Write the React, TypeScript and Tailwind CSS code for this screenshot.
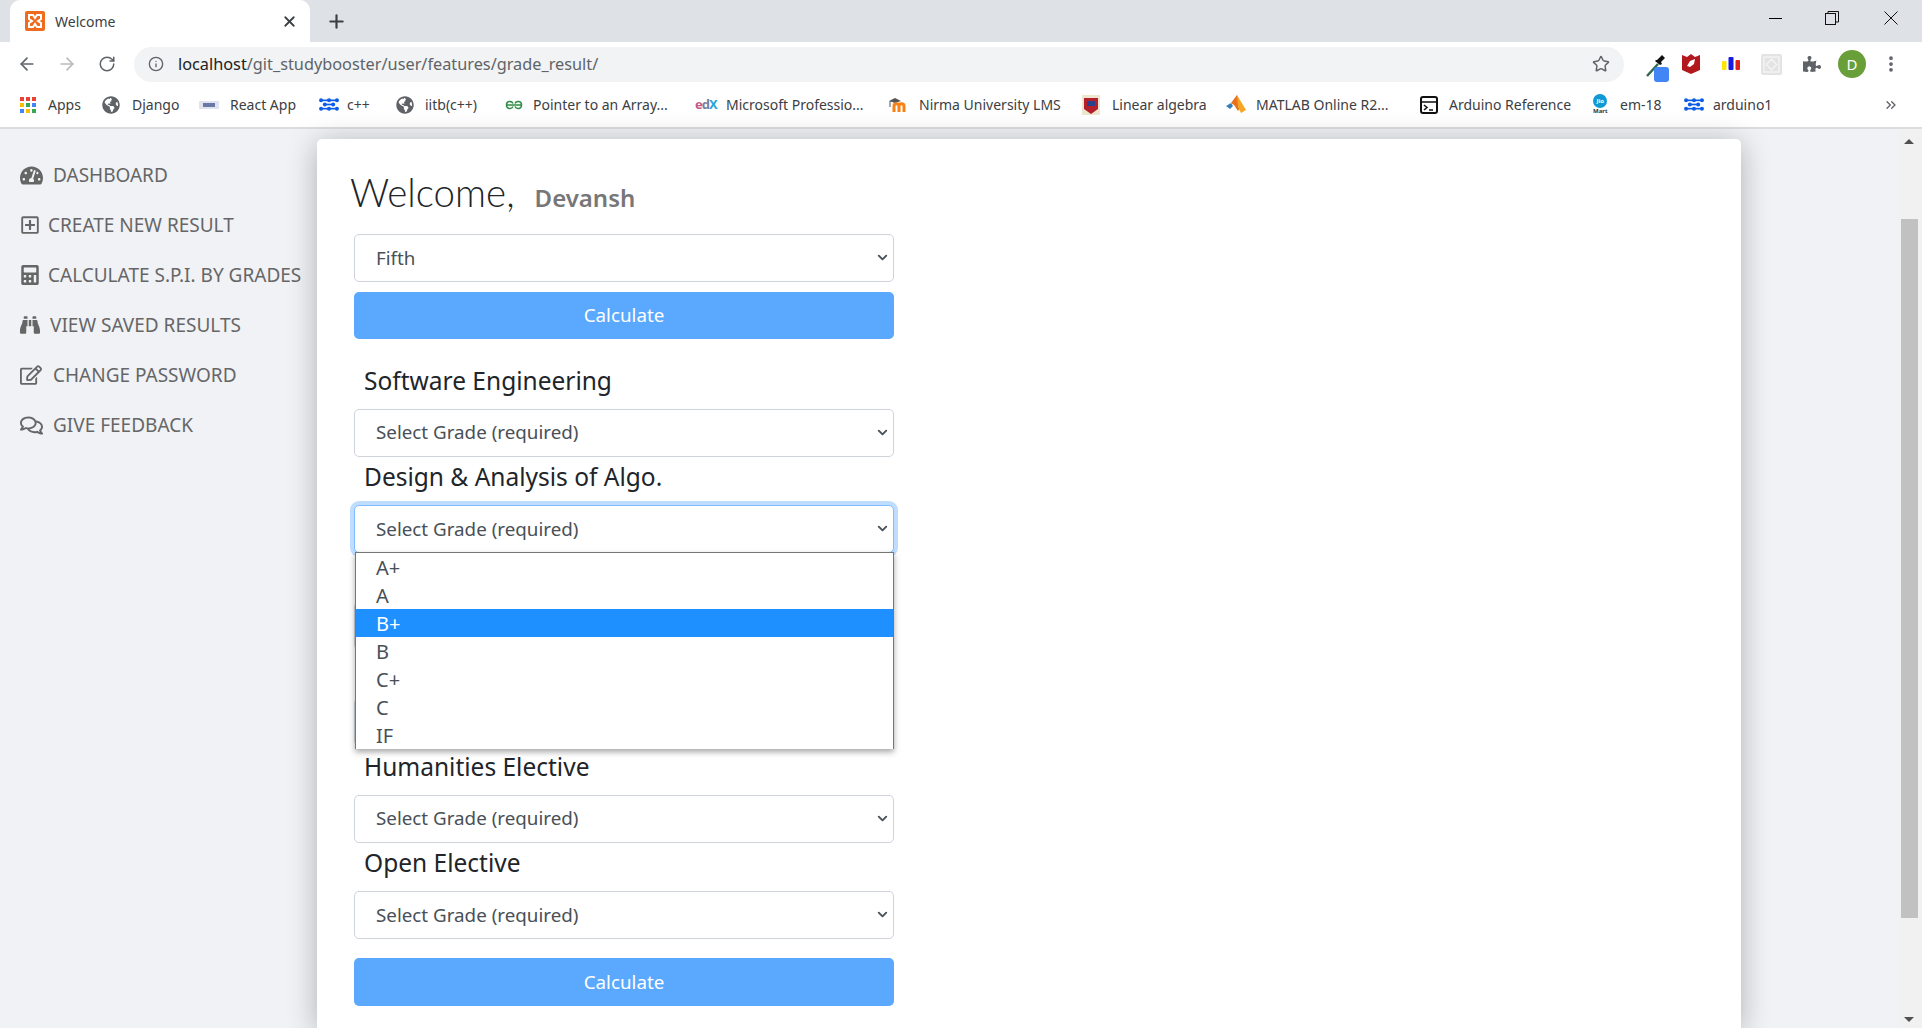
import {
  FaTachometerAlt,
  FaRegPlusSquare,
  FaCalculator,
  FaBinoculars,
  FaRegEdit,
  FaRegComments,
  FaPuzzlePiece,
  FaGlobeAmericas,
} from "react-icons/fa";
import { ArrowLeft, ArrowRight, RotateCw, Info, Star, X, Plus, ChevronDown, ChevronsRight, EllipsisVertical } from "lucide-react";
import type { ReactNode } from "react";

const FONT = "font-['Noto_Sans','Open_Sans',sans-serif]";

const navItems = [
  { label: "DASHBOARD", icon: <FaTachometerAlt size={23} />, gap: "w-[33px]" },
  { label: "CREATE NEW RESULT", icon: <FaRegPlusSquare size={20} />, gap: "w-[28px]" },
  { label: "CALCULATE S.P.I. BY GRADES", icon: <FaCalculator size={20} />, gap: "w-[28px]" },
  { label: "VIEW SAVED RESULTS", icon: <FaBinoculars size={20} />, gap: "w-[30px]" },
  { label: "CHANGE PASSWORD", icon: <FaRegEdit size={22} />, gap: "w-[33px]" },
  { label: "GIVE FEEDBACK", icon: <FaRegComments size={23} />, gap: "w-[33px]" },
];

// two of the subjects sit behind the open dropdown in the picture
const subjects = ["Software Engineering", "Design & Analysis of Algo.", "", "", "Humanities Elective", "Open Elective"];
const grades = ["A+", "A", "B+", "B", "C+", "C", "IF"];

function GlobeIcon() {
  return <FaGlobeAmericas size={18} className="text-[#5f6368]" />;
}

function DotsIcon() {
  return (
    <svg width="20" height="17" viewBox="-3 0 24 16" fill="#0b5ce6">
      <rect x="1" y="2" width="16" height="2" />
      <rect x="5" y="7" width="8" height="2" />
      <rect x="1" y="12" width="16" height="2" />
      {[-0.500, 9, 18.500].map((x) => <circle key={x} cx={x} cy="3" r="2.400" />)}
      {[4, 14].map((x) => <circle key={x} cx={x} cy="8" r="2.400" />)}
      {[-0.500, 9, 18.500].map((x) => <circle key={x} cx={x} cy="13" r="2.400" />)}
    </svg>
  );
}

const bookmarks: { label: string; icon: ReactNode; iconBox: string; item: string }[] = [
  {
    label: "Apps",
    iconBox: "w-[28px]",
    item: "w-[82px]",
    icon: (
      <svg width="16" height="16" viewBox="0 0 16 16">
        {[0, 1, 2].flatMap((r) =>
          [0, 1, 2].map((c) => (
            <rect
              key={`${r}${c}`}
              x={c * 6}
              y={r * 6}
              width="4"
              height="4"
              fill={["#ea4335", "#ea4335", "#ea4335", "#fbbc04", "#34a853", "#4285f4", "#4285f4", "#fbbc04", "#34a853"][r * 3 + c]}
            />
          )),
        )}
      </svg>
    ),
  },
  { label: "Django", iconBox: "w-[30px]", item: "w-[97px]", icon: <GlobeIcon /> },
  {
    label: "React App",
    iconBox: "w-[31px]",
    item: "w-[120px]",
    icon: (
      <svg width="20" height="10" viewBox="0 0 20 10">
        <rect x="0" y="1" width="20" height="8" rx="1" fill="#dfe3ee" />
        <rect x="4" y="3" width="12" height="4" fill="#6a78a8" />
      </svg>
    ),
  },
  { label: "c++", iconBox: "w-[28px]", item: "w-[77px]", icon: <DotsIcon /> },
  { label: "iitb(c++)", iconBox: "w-[29px]", item: "w-[109px]", icon: <GlobeIcon /> },
  {
    label: "Pointer to an Array...",
    iconBox: "w-[28px]",
    item: "w-[190px]",
    icon: (
      <svg width="18" height="10" viewBox="0 0 18 10" fill="none" stroke="#2f8d46" strokeWidth="1.500">
        <path d="M1 5h16M1.500 5a3.400 3.400 0 0 1 6.500-1.500M16.500 5a3.400 3.400 0 0 0-6.500-1.500M1.500 5a3.400 3.400 0 0 0 6.500 1.500M16.500 5a3.400 3.400 0 0 1-6.500 1.500" />
      </svg>
    ),
  },
  {
    label: "Microsoft Professio...",
    iconBox: "w-[31px]",
    item: "w-[194px]",
    icon: (
      <span className="flex text-[13px] font-bold leading-none tracking-[-1px]">
        <span className="text-[#c2588b]">e</span>
        <span className="text-[#77809f]">d</span>
        <span className="text-[#29a5dc]">X</span>
      </span>
    ),
  },
  {
    label: "Nirma University LMS",
    iconBox: "w-[30px]",
    item: "w-[193px]",
    icon: (
      <svg width="20" height="16" viewBox="0 0 20 16">
        <path d="M0 4l6-3 6 3-6 2z" fill="#555" />
        <path d="M1 4v6" stroke="#555" />
        <path d="M5 15V9c0-3 5-3 5 0v6M10 9c0-3 5-3 5 0v6" fill="none" stroke="#f98012" strokeWidth="3" />
      </svg>
    ),
  },
  {
    label: "Linear algebra",
    iconBox: "w-[30px]",
    item: "w-[144px]",
    icon: (
      <svg width="18" height="20" viewBox="0 0 18 20">
        <rect width="18" height="20" fill="#f0e6d0" />
        <path d="M2 3h14v11l-7 5-7-5z" fill="#b3202a" />
        <rect x="5" y="6" width="8" height="5" fill="#2b3f8c" />
      </svg>
    ),
  },
  {
    label: "MATLAB Online R2...",
    iconBox: "w-[30px]",
    item: "w-[193px]",
    icon: (
      <svg width="20" height="20" viewBox="0 0 20 20">
        <path d="M0 11l5-3 2 3-3 3z" fill="#3c7fb5" />
        <path d="M5 8l6-8 4 11-3 5-4-6z" fill="#e8711e" />
        <path d="M11 0l9 15-5 3-3-6z" fill="#f5a623" />
      </svg>
    ),
  },
  {
    label: "Arduino Reference",
    iconBox: "w-[30px]",
    item: "w-[174px]",
    icon: (
      <svg width="20" height="20" viewBox="0 0 20 20" fill="none" stroke="#111" strokeWidth="2">
        <rect x="2" y="2" width="16" height="16" rx="2" />
        <path d="M2 7h16M5 10l3 2.500-3 2.500M10 15h4" strokeWidth="1.500" />
      </svg>
    ),
  },
  {
    label: "em-18",
    iconBox: "w-[27px]",
    item: "w-[91px]",
    icon: (
      <span className="flex flex-col items-center">
        <span className="flex h-[14px] w-[14px] items-center justify-center rounded-full bg-[#0f9ad6] text-[6px] font-bold leading-none text-white">Jio</span>
        <span className="text-[6px] font-bold leading-[7px] text-[#333]">Mart</span>
      </span>
    ),
  },
  { label: "arduino1", iconBox: "w-[29px]", item: "w-[90px]", icon: <DotsIcon /> },
];

function FormSelect({ value, focused }: { value: string; focused?: boolean }) {
  return (
    <div className="relative">
      <select
        defaultValue={value}
        className={`h-[48px] w-full appearance-none rounded-[5px] border bg-white pl-[21px] text-[18.800px] text-[#495057] ${
          focused ? "border-[#80bdff] shadow-[0_0_0_4px_rgba(0,123,255,0.25)]" : "border-[#ced4da]"
        }`}
      >
        <option>{value}</option>
      </select>
      <ChevronDown size={15} strokeWidth={3} className="pointer-events-none absolute right-[4px] top-[16px] text-[#495057]" />
    </div>
  );
}

function CalculateButton({ height }: { height: string }) {
  return (
    <button className={`w-full rounded-[5px] bg-[#5aa9ff] text-[18.800px] text-white ${height}`}>Calculate</button>
  );
}

export default function App() {
  return (
    <div className={`flex h-[1028px] w-full flex-col overflow-hidden bg-[#f0f2f6] ${FONT}`}>
      {/* tab strip */}
      <div className="flex h-[42px] shrink-0 items-end bg-[#dee1e6]">
        <div className="ml-[10px] flex h-[42px] w-[300px] items-center rounded-t-[10px] bg-white pl-[15px] pr-[12px]">
          <svg width="20" height="20" viewBox="0 0 20 20">
            <rect width="20" height="20" rx="2" fill="#ef6c1f" />
            <path d="M4 4h4l2 3 2-3h4v4l-3 2 3 2v4h-4l-2-3-2 3H4v-4l3-2-3-2z" fill="none" stroke="#fff" strokeWidth="2" />
          </svg>
          <span className="ml-[10px] flex-1 text-[14px] text-[#3c4043]">Welcome</span>
          <X size={17} strokeWidth={2.500} className="text-[#3c4043]" />
        </div>
        <Plus size={21} strokeWidth={2.500} className="mb-[10px] ml-[16px] text-[#3c4043]" />
        <div className="flex-1" />
        <div className="mb-[17px] flex items-center">
          <div className="mr-[43px] h-[1px] w-[13px] bg-black" />
          <svg width="14" height="14" viewBox="0 0 14 14" fill="none" stroke="#111" className="mr-[45px]">
            <rect x="0.500" y="2.500" width="10" height="11" />
            <path d="M3 2.500V0.500h10.500V11h-3" />
          </svg>
          <svg width="14" height="14" viewBox="0 0 14 14" stroke="#111" className="mr-[24px]">
            <path d="M0.500 0.500l13 13M13.500 0.500l-13 13" />
          </svg>
        </div>
      </div>

      {/* toolbar */}
      <div className="flex h-[44px] shrink-0 items-center bg-white text-[#5f6368]">
        <ArrowLeft size={20} className="ml-[17px]" />
        <ArrowRight size={20} className="ml-[20px] text-[#b8babd]" />
        <RotateCw size={18} className="ml-[21px]" />
        <div className="ml-[18px] flex h-[35px] w-[1490px] items-center rounded-full bg-[#f1f3f4] pl-[14px] pr-[14px]">
          <Info size={16} />
          <span className="ml-[14px] flex-1 text-[16.300px] text-[#5f6368]">
            <span className="text-[#202124]">localhost</span>/git_studybooster/user/features/grade_result/
          </span>
          <Star size={18} />
        </div>
        <div className="relative ml-[21px] mt-[8px] h-[28px] w-[24px]">
          <svg width="24" height="24" viewBox="0 0 24 24" fill="none" className="absolute left-0 top-0">
            <path d="M2 22L13 10" stroke="#2f6b4f" strokeWidth="2.500" />
            <path d="M12 6l5-5 3 3-4 4 1 2-2 1-5-4 1-1z" fill="#111" />
          </svg>
          <span className="absolute bottom-0 right-0 h-[15px] w-[15px] rounded-[3px] bg-[#4285f4]" />
        </div>
        <svg width="18" height="20" viewBox="0 0 18 20" className="ml-[13px]">
          <path d="M0 1l5 2 4-3 4 3 5-2v15l-9 4-9-4z" fill="#b2181e" />
          <path d="M5 12l3-5 5-2-1 5-4 3z" fill="#fff" />
        </svg>
        <svg width="18" height="14" viewBox="0 0 18 14" className="ml-[22px]">
          <rect x="0" y="4" width="4.500" height="9" rx="1" fill="#ffe600" />
          <rect x="6.500" y="0" width="5" height="13" rx="1" fill="#1a1ae0" />
          <rect x="13.500" y="3" width="4.500" height="10" rx="1" fill="#e0201a" />
        </svg>
        <svg width="21" height="21" viewBox="0 0 21 21" className="ml-[21px]">
          <rect width="21" height="21" rx="2" fill="#e3e3e3" />
          <path d="M3 3h15v15H3zM10.500 5l5 5.500-5 5.500-5-5.500z" fill="none" stroke="#f4f4f4" strokeWidth="1.500" />
        </svg>
        <FaPuzzlePiece size={18} className="ml-[21px] text-[#5f6368]" />
        <div className="ml-[17px] flex h-[28px] w-[28px] items-center justify-center rounded-full bg-[#689f38] text-[15px] text-white">D</div>
        <EllipsisVertical size={20} strokeWidth={2.500} className="ml-[15px]" />
      </div>

      {/* bookmarks bar */}
      <div className="flex h-[43px] shrink-0 items-center border-b-[2px] border-[#dadce0] bg-white pb-[4px] pl-[20px] text-[14px] text-[#3c4043]">
        {bookmarks.map((b) => (
          <div key={b.label} className={`flex shrink-0 items-center ${b.item}`}>
            <span className={`flex h-[20px] shrink-0 items-center ${b.iconBox}`}>{b.icon}</span>
            <span className="whitespace-nowrap">{b.label}</span>
          </div>
        ))}
        <div className="flex-1" />
        <ChevronsRight size={16} className="mr-[23px] text-[#5f6368]" />
      </div>

      {/* page */}
      <div className="relative flex min-h-0 flex-1">
        <aside className="w-[317px] shrink-0 pl-[20px] pt-[21px] text-[#666]">
          {navItems.map((item) => (
            <div key={item.label} className="flex h-[50px] items-center text-[19px]">
              <span className={`flex shrink-0 ${item.gap}`}>{item.icon}</span>
              <span className="whitespace-nowrap">{item.label}</span>
            </div>
          ))}
        </aside>

        <main className="mt-[10px] w-[1424px] shrink-0 rounded-t-[5px] bg-white pl-[33px] pt-[28px] shadow-[0_4px_30px_rgba(0,0,0,0.28)]">
          <div className="flex h-[50px] items-baseline">
            <span className="font-['Lato',sans-serif] text-[38.500px] font-light leading-[50px] text-[#212529]">Welcome,</span>
            <span className="ml-[20px] text-[24px] font-semibold text-[#777]">Devansh</span>
          </div>

          <div className="ml-[4px] mt-[17px] w-[540px]">
            <FormSelect value="Fifth" />
            <div className="mt-[10px]">
              <CalculateButton height="h-[47px]" />
            </div>

            <div className="relative mt-[21px]">
              {subjects.map((subject, i) => (
                <div key={i} className="flex h-[96.500px] flex-col justify-end">
                  <div className="mb-[8px] h-[40px] pl-[10px] text-[24.500px] leading-[40px] text-[#212529]">{subject}</div>
                  <FormSelect value="Select Grade (required)" focused={i === 1} />
                </div>
              ))}

              {/* open dropdown of the focused select */}
              <div className="absolute left-[1px] right-0 top-[192px] border-x border-t border-[#767676] bg-white text-[20px] text-[#495057] shadow-[0_3px_6px_rgba(0,0,0,0.35)]">
                {grades.map((grade) => (
                  <div
                    key={grade}
                    className={`h-[28px] pl-[20px] leading-[30px] ${grade === "B+" ? "bg-[#1e90ff] text-white" : ""}`}
                  >
                    {grade}
                  </div>
                ))}
              </div>
            </div>

            <div className="mt-[19px]">
              <CalculateButton height="h-[48px]" />
            </div>
          </div>
        </main>

        <div className="flex-1" />

        {/* scrollbar */}
        <div className="relative w-[23px] shrink-0 bg-[#f1f1f1]">
          <svg width="12" height="8" viewBox="0 0 12 8" className="absolute left-[4px] top-[8px]">
            <path d="M1 7l5-5 5 5z" fill="#505050" />
          </svg>
          <div className="absolute left-[2px] top-[90px] h-[699px] w-[17px] bg-[#c1c1c1]" />
          <svg width="12" height="8" viewBox="0 0 12 8" className="absolute bottom-[4px] left-[4px]">
            <path d="M1 1l5 5 5-5z" fill="#505050" />
          </svg>
        </div>
      </div>
    </div>
  );
}
